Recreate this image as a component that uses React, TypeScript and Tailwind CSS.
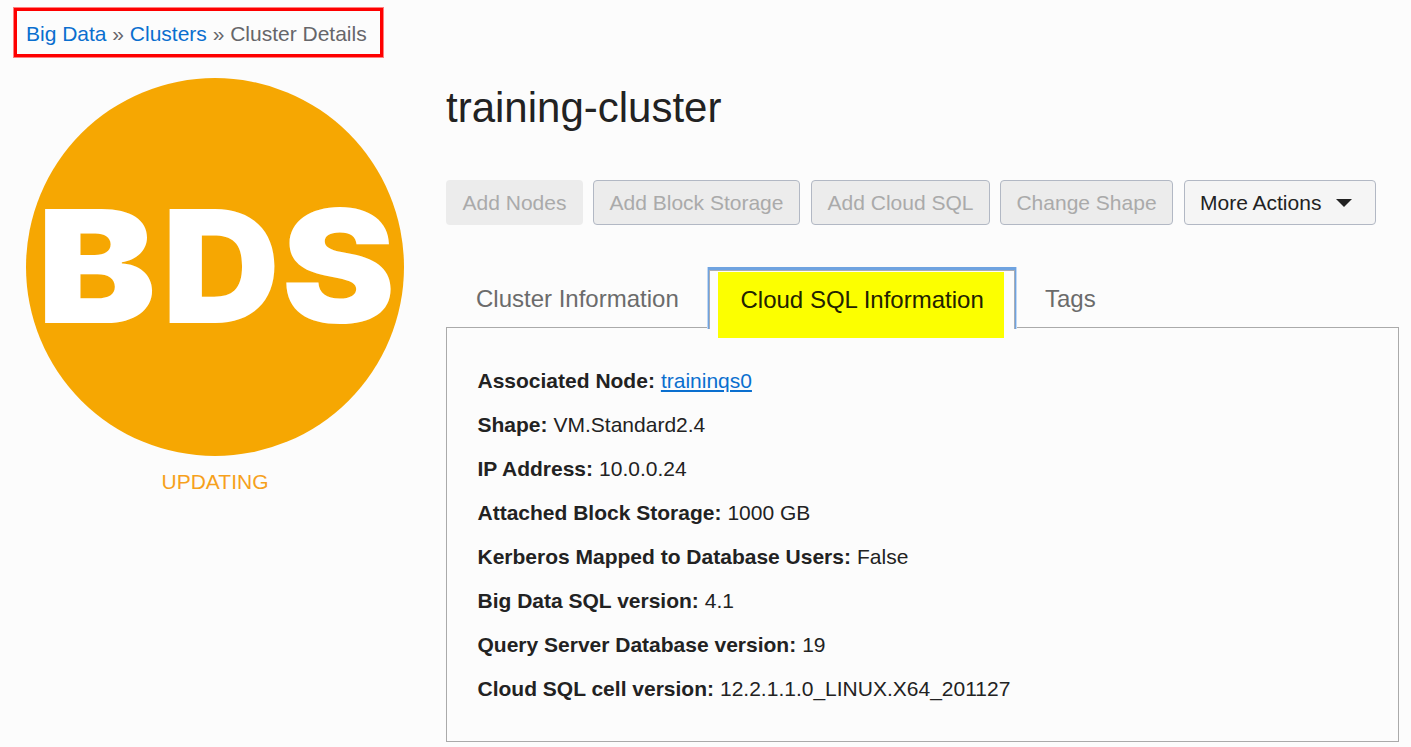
type Row = { label: string; value: string; link?: boolean };

const rows: Row[] = [
  { label: 'Associated Node:', value: 'traininqs0', link: true },
  { label: 'Shape:', value: 'VM.Standard2.4' },
  { label: 'IP Address:', value: '10.0.0.24' },
  { label: 'Attached Block Storage:', value: '1000 GB' },
  { label: 'Kerberos Mapped to Database Users:', value: 'False' },
  { label: 'Big Data SQL version:', value: '4.1' },
  { label: 'Query Server Database version:', value: '19' },
  { label: 'Cloud SQL cell version:', value: '12.2.1.1.0_LINUX.X64_201127' },
];

function Breadcrumb() {
  return (
    <nav className="ml-[14px] mt-[8px] flex h-[49px] w-[369px] items-center whitespace-nowrap border-[3px] border-[#fe0000] pl-[9px] pt-[3px] text-[21px] text-[#66666a] shadow-[0_0_0_1px_#ff7f7f]">
      <a className="text-[#0a6fcf]">Big Data</a>
      <span className="mx-[5.8px]">»</span>
      <a className="text-[#0a6fcf]">Clusters</a>
      <span className="mx-[5.8px]">»</span>
      <span>Cluster Details</span>
    </nav>
  );
}

function StatusBadge() {
  return (
    <svg viewBox="0 0 378 378" className="block size-[378px]">
      <circle cx="189" cy="189" r="189" fill="#f6a702" />
      <g fontSize="157" fontWeight="900" fill="#fff" fontFamily="Inter, sans-serif">
        <text x="10.7" y="245" textLength="119.5" lengthAdjust="spacingAndGlyphs">B</text>
        <text x="136" y="245" textLength="118" lengthAdjust="spacingAndGlyphs">D</text>
        <text x="255.5" y="245" textLength="114" lengthAdjust="spacingAndGlyphs">S</text>
      </g>
    </svg>
  );
}

export default function App() {
  return (
    <div className="flow-root h-[747px] w-[1411px] overflow-hidden bg-[#fcfcfc] font-['Liberation_Sans',Arial,sans-serif] text-[#222]">
      <Breadcrumb />
      <div className="flex">
        <aside className="ml-[26px] mt-[21px] w-[378px] shrink-0 text-center">
          <StatusBadge />
          <p className="mt-[11px] text-[21px] leading-[30px] text-[#f6a11c]">UPDATING</p>
        </aside>
        <main className="ml-[42px] mt-[21px] w-[953px] shrink-0">
          <h1 className="h-[102px] text-[42px] leading-[60px]">training-cluster</h1>
          <div className="flex whitespace-nowrap text-[21px] text-[#aaa]">
            <button className="h-[45px] w-[137px] rounded bg-[#ececec]">Add Nodes</button>
            <button className="ml-[10px] h-[45px] w-[207px] rounded border border-[#b2b8c4] bg-[#ececec]">Add Block Storage</button>
            <button className="ml-[11px] h-[45px] w-[179px] rounded border border-[#b2b8c4] bg-[#ececec]">Add Cloud SQL</button>
            <button className="ml-[10px] h-[45px] w-[173px] rounded border border-[#b2b8c4] bg-[#ececec]">Change Shape</button>
            <button className="ml-[11px] flex h-[45px] w-[192px] items-center rounded border border-[#b2b8c4] bg-[#f5f5f5] pl-[15px] text-[#222]">
              More Actions
              <svg width="16" height="8" viewBox="0 0 16 8" className="ml-[15px]"><path d="M0 0H16L8 8Z" fill="#222" /></svg>
            </button>
          </div>
          <div className="mt-[42px] flex h-[60px] whitespace-nowrap text-[24px] leading-[32px] text-[#6b6b6b]">
            <div className="w-[261px] pl-[30px] pt-[16px]">Cluster Information</div>
            <div className="relative z-10 h-[62px] w-[310px] border-x border-[#c0d8f5] bg-[#fcfcfc]">
              <div className="h-full border-x border-t-[3px] border-[#6fa3e0]">
                <div className="h-full border-x border-t border-[#a9adb5] px-[8px] pt-px">
                  <div className="h-[66px] w-[286px] bg-[#fcff00] pl-[22.5px] pt-[12px] text-[#222200]">Cloud SQL Information</div>
                </div>
              </div>
            </div>
            <div className="pl-[28px] pt-[16px]">Tags</div>
          </div>
          <dl className="h-[415px] border border-[#aaa] pl-[30.5px] pt-[31px] text-[21px] leading-[44px]">
            {rows.map((r) => (
              <div key={r.label} className="flex h-[44px] whitespace-nowrap">
                <dt className="mr-[6px] font-bold">{r.label}</dt>
                <dd className={r.link ? 'text-[#0a6fcf] underline decoration-2 underline-offset-2' : ''}>{r.value}</dd>
              </div>
            ))}
          </dl>
        </main>
      </div>
    </div>
  );
}
